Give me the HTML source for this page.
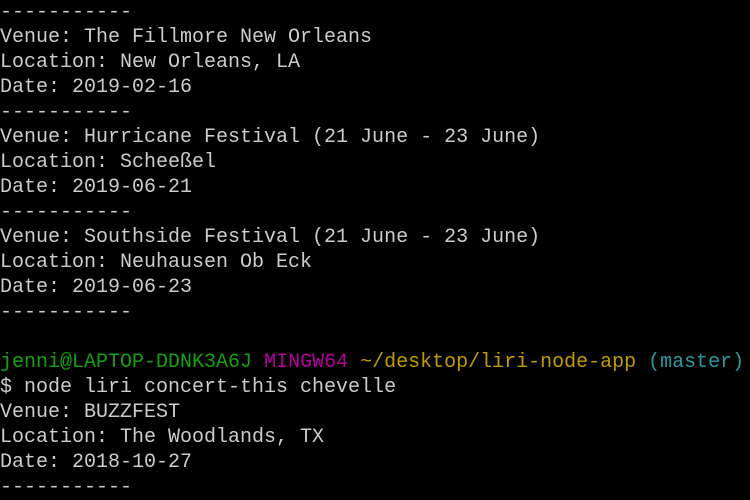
<!DOCTYPE html>
<html><head><style>
body{margin:0;background:#000;width:750px;height:499px;overflow:hidden}
pre{margin:0;position:absolute;top:0px;left:0;font-family:"Liberation Mono",monospace;font-size:20px;line-height:25px;color:#cccccc}
.g{color:#13a10e}.m{color:#b4009e}.y{color:#c19c00}.c{color:#2a9aa0}
</style></head><body><pre>-----------
Venue: The Fillmore New Orleans
Location: New Orleans, LA
Date: 2019-02-16
-----------
Venue: Hurricane Festival (21 June - 23 June)
Location: Scheeßel
Date: 2019-06-21
-----------
Venue: Southside Festival (21 June - 23 June)
Location: Neuhausen Ob Eck
Date: 2019-06-23
-----------

<span class="g">jenni@LAPTOP-DDNK3A6J</span> <span class="m">MINGW64</span> <span class="y">~/desktop/liri-node-app</span> <span class="c">(master)</span>
$ node liri concert-this chevelle
Venue: BUZZFEST
Location: The Woodlands, TX
Date: 2018-10-27
-----------</pre></body></html>
